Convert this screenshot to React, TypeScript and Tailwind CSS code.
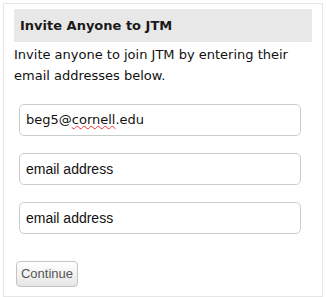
import React from 'react';

const emails = ['beg5@cornell.edu', '', ''];

export default function App() {
  return (
    <div className="w-[326px] h-[297px] bg-white p-[3px]">
      <div className="h-[294px] border border-[#e6e6e6] px-[10px] pt-[5px] font-['DejaVu_Sans',Verdana,sans-serif] text-[#111]">
        <h2 className="h-[33px] bg-[#e8e8e8] px-[6px] flex items-center text-[13px] font-bold text-[#1a1a1a]">
          Invite Anyone to JTM
        </h2>
        <p className="mt-[2px] text-[13px] leading-[21px]">
          Invite anyone to join JTM by entering their email addresses below.
        </p>
        <div className="mt-[18px] ml-[5px] flex flex-col gap-[17px]">
          {emails.map((email, i) => (
            <div
              key={i}
              className="w-[282px] h-[32px] border border-[#ccc] rounded-[5px] px-[6px] flex items-center"
            >
              {email ? (
                <span className="text-[13px] text-[#111]">
                  beg5@<span className="underline decoration-wavy decoration-red-500 decoration-1">cornell</span>.edu
                </span>
              ) : (
                <span className="font-['Liberation_Sans',Arial,sans-serif] text-[14px] text-[#111]">email address</span>
              )}
            </div>
          ))}
        </div>
        <button className="mt-[27px] ml-[2px] h-[26px] w-[62px] border border-[#c4c4c4] rounded-[4px] bg-gradient-to-b from-white to-[#e6e6e6] font-['Liberation_Sans',Arial,sans-serif] text-[13px] text-[#555]">
          Continue
        </button>
      </div>
    </div>
  );
}
